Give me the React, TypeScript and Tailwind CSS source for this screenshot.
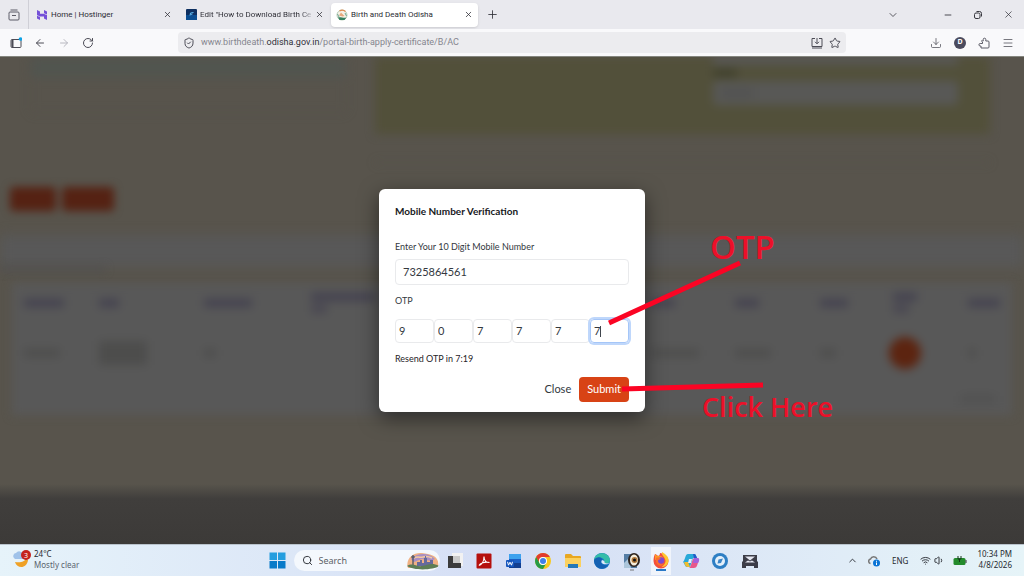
import { useState } from "react";
import {
  ArrowLeft,
  ArrowRight,
  ChevronDown,
  ChevronUp,
  Download,
  Menu,
  Minus,
  Plus,
  RotateCw,
  Search,
  ShieldCheck,
  Star,
  Volume1,
  Wifi,
  X,
} from "lucide-react";

interface TableColumn {
  header: string;
  subHeader?: string;
  cell: string;
}

// placeholder widths for the content behind the dialog
const columns: TableColumn[] = [
  { header: "w-10", cell: "w-9" },
  { header: "w-5", cell: "w-12 h-6" },
  { header: "w-12", cell: "w-3" },
  { header: "w-16", subHeader: "w-4", cell: "w-0" },
  { header: "w-6", cell: "w-12" },
  { header: "w-6", cell: "w-9" },
  { header: "w-7", cell: "w-4" },
  { header: "w-6", subHeader: "w-4", cell: "dot" },
  { header: "w-8", cell: "w-2" },
];

function HostingerIcon() {
  return (
    <svg viewBox="0 0 12 12" className="size-3 shrink-0">
      <path
        d="M1 1l3 1.500v2.300h3.800L11 6.300H1zM8 1l3 1.500v3L8 4.200zM1 6.800l3 1.300V11L1 9.500zM1 6h10v5L8 9.500V7.600H4z"
        fill="#7450d8"
      />
    </svg>
  );
}

function BlueSiteIcon() {
  return (
    <svg viewBox="0 0 11 11" className="size-[11px] shrink-0">
      <rect width="11" height="11" rx="1" fill="#0d2f60" />
      <rect y="6" width="11" height="5" fill="#0a4d91" />
      <path d="M4 6.500l.5-2.500 3-.5M4.500 5.500l2-.5" stroke="#5cbaf3" fill="none" />
    </svg>
  );
}

function OdishaIcon() {
  return (
    <svg viewBox="0 0 12 12" className="size-3 shrink-0">
      <circle cx="6" cy="6" r="5" fill="#f6f1e7" stroke="#b7cdb8" />
      <path d="M3.500 2a5 5 0 0 1 6 .5" stroke="#e18a50" strokeWidth="1.200" fill="none" />
      <path d="M3 6.500l2-3L8.500 7l-2 .5z" fill="#e6a97f" />
      <path d="M2 8.500c2-1 6 1 8.500 0L8.500 11h-5z" fill="#36805f" />
      <path d="M1.500 5l1.500 3M9 4l1.500 3" stroke="#6fa593" />
    </svg>
  );
}

function BrowserTabs() {
  return (
    <div className="flex h-[29px] items-center bg-[#e9e9ee] font-[Roboto,sans-serif] text-[8px] text-[#2b2b33]">
      <button aria-label="Recent browsing" className="flex h-full w-[29px] items-center justify-center border-r border-[#cfcfd6]">
        <svg viewBox="0 0 12 12" className="size-3" fill="none" stroke="#5b5b66">
          <path d="M2.500 1h7M1 5.500V4a1 1 0 0 1 1-1h8a1 1 0 0 1 1 1v6a1 1 0 0 1-1 1H2a1 1 0 0 1-1-1zM4 6.500h4" />
        </svg>
      </button>
      <div className="flex w-[150px] items-center gap-[3px] px-[7px]">
        <HostingerIcon />
        <span className="flex-1 whitespace-nowrap">Home | Hostinger</span>
        <button aria-label="Close Home tab">
          <X size={9} />
        </button>
      </div>
      <div className="flex w-[152px] items-center gap-[3px] px-[7px]">
        <BlueSiteIcon />
        <span className="flex-1 bg-linear-to-r from-[#2b2b33] from-90% to-[#c9c9d0] bg-clip-text whitespace-nowrap text-transparent">
          Edit "How to Download Birth Ce
        </span>
        <button aria-label="Close Edit tab">
          <X size={9} />
        </button>
      </div>
      <div className="flex h-6 w-[147px] items-center gap-[3px] rounded bg-white px-[5px] shadow-sm">
        <OdishaIcon />
        <span className="flex-1 whitespace-nowrap">Birth and Death Odisha</span>
        <button aria-label="Close Birth and Death tab">
          <X size={9} />
        </button>
      </div>
      <button aria-label="New tab" className="ml-2">
        <Plus size={13} strokeWidth={1.5} />
      </button>
      <div className="ml-auto flex items-center pr-[10px]">
        <button aria-label="List all tabs" className="mr-11">
          <ChevronDown size={12} strokeWidth={1.5} />
        </button>
        <div className="flex items-center gap-5">
          <button aria-label="Minimize">
            <Minus size={10} />
          </button>
          <button aria-label="Restore">
            <svg viewBox="0 0 10 10" className="size-[10px]" fill="none" stroke="#38383f">
              <rect x="1.500" y="3" width="5.500" height="5.500" rx="1.500" />
              <path d="M3.500 1.500h3a2 2 0 0 1 2 2v3" />
            </svg>
          </button>
          <button aria-label="Close window">
            <X size={11} strokeWidth={1.5} />
          </button>
        </div>
      </div>
    </div>
  );
}

function Toolbar() {
  return (
    <div className="flex h-[27px] items-center bg-[#f9f9fb] text-[#4c4c56]">
      <div className="flex w-[178px] items-center gap-3 pl-[10px]">
        <button aria-label="Toggle sidebar">
          <svg viewBox="0 0 12 12" className="size-3" fill="none" stroke="#4c4c56">
            <rect x="1" y="2.500" width="10" height="8" rx="1" />
            <path d="M2.500 3v7" strokeWidth="2" />
            <circle cx="10.500" cy="2" r="1.800" fill="#0ca2e6" stroke="none" />
          </svg>
        </button>
        <button aria-label="Back">
          <ArrowLeft size={12} />
        </button>
        <button aria-label="Forward" className="text-[#b8b8c0]">
          <ArrowRight size={12} />
        </button>
        <button aria-label="Reload">
          <RotateCw size={12} />
        </button>
      </div>
      <div className="flex h-[21px] flex-1 items-center gap-[6px] rounded bg-[#ececef] px-[5px]">
        <ShieldCheck size={12} />
        <span className="flex-1 font-[Roboto,sans-serif] text-[9px] whitespace-nowrap text-[#85858e]">
          www.birthdeath.<span className="text-[#2f2f38]">odisha.gov.in</span>/portal-birth-apply-certificate/B/AC
        </span>
        <button aria-label="Install app">
          <svg viewBox="0 0 12 12" className="size-3" fill="none" stroke="#4c4c56">
            <path d="M4 1.500H1v8h10v-8H8M6 1v5.500M4 4.800l2 2 2-2M1 11h10" />
          </svg>
        </button>
        <button aria-label="Bookmark this page">
          <Star size={12} />
        </button>
      </div>
      <div className="flex w-[178px] items-center justify-end gap-3 pr-[10px]">
        <button aria-label="Downloads">
          <Download size={12} strokeWidth={1.5} />
        </button>
        <button aria-label="Account" className="flex size-3 items-center justify-center rounded-full bg-[#4b4b5e] text-[7px] font-bold text-white">
          D
        </button>
        <button aria-label="Extensions">
          <svg viewBox="0 0 12 12" className="size-3" fill="none" stroke="#5b5b66">
            <path d="M3 4h2.200V2.500a1.300 1.300 0 0 1 2.600 0V4H10a1 1 0 0 1 1 1v5a1 1 0 0 1-1 1H3V9H2.200a1.200 1.200 0 0 1 0-2.500H4.500V5" />
          </svg>
        </button>
        <button aria-label="Menu">
          <Menu size={12} strokeWidth={1.5} />
        </button>
      </div>
    </div>
  );
}

function DimmedPage() {
  return (
    <div aria-hidden="true" className="flex flex-1 flex-col overflow-hidden border-t border-[#85867f] bg-[#58544c]">
      <div className="flex gap-7 pr-[34px] pl-[30px] blur-[5px]">
        <div className="h-14 w-[317px] rounded border border-[#544f4c]">
          <div className="h-5 rounded-b bg-[#51554f]" />
        </div>
        <div className="h-[106px] flex-1 border-b border-[#54504b]">
          <div className="flex h-[77px] justify-end bg-[#52503a] pr-8">
            <div className="flex w-[245px] flex-col">
              <div className="h-2 bg-[#585856]" />
              <div className="my-1 h-2 w-6 bg-[#40402c]" />
              <div className="h-6 rounded bg-[#585856] px-2 py-2">
                <div className="h-2 w-8 bg-[#515151]" />
              </div>
            </div>
          </div>
        </div>
      </div>
      <div className="mt-6 flex gap-[6px] pl-[10px] blur-[4px]">
        <div className="h-6 w-[46px] rounded bg-[#552213]" />
        <div className="h-6 w-[52px] rounded bg-[#552213]" />
      </div>
      <div className="mt-6 h-8 bg-[#585858] blur-[6px]" />
      <div className="h-1 w-[105px] bg-[#504f50] blur-[4px]" />
      <div className="mx-[12px] mt-3 h-[132px] bg-[#585858] blur-[5px]">
        <div className="grid grid-cols-[75fr_105fr_108fr_340fr_85fr_85fr_73fr_75fr_32fr] px-3 pt-2">
          {columns.map((col, i) => (
            <div key={i}>
              <div className="flex h-6 flex-col justify-center gap-1">
                <div className={`h-2 bg-[#43414f] ${col.header}`} />
                {col.subHeader && <div className={`h-2 bg-[#484651] ${col.subHeader}`} />}
              </div>
              <div className="mt-5 flex h-9 items-center">
                {col.cell === "dot" ? (
                  <div className="-ml-1 size-8 shrink-0 rounded-full bg-[#5c2410]" />
                ) : (
                  <div className={`h-2 bg-[#4d4d4c] ${col.cell}`} />
                )}
              </div>
            </div>
          ))}
        </div>
        <div className="mt-6 mr-4 ml-auto h-2 w-9 bg-[#515151]" />
      </div>
      <div className="mt-auto h-[60px] bg-linear-to-b from-[#58544c] via-[#403e3c] via-25% to-[#3c3a38]" />
    </div>
  );
}

function Annotations() {
  return (
    <div className="pointer-events-none font-['Open_Sans','Noto_Sans',sans-serif] font-semibold whitespace-nowrap text-[#ec1029]">
      <svg viewBox="0 0 160 134" className="absolute top-[70px] left-[229px] h-[134px] w-40" stroke="#fb0424">
        <path d="M132 4L1 64" strokeWidth="5" />
        <path d="M14 130L155 126" strokeWidth="5" />
      </svg>
      <span className="absolute top-[42px] left-[331px] text-[33px] leading-8">OTP</span>
      <span className="absolute top-[204px] left-[323px] text-[27px] leading-7">Click Here</span>
    </div>
  );
}

function VerificationDialog() {
  const [mobile, setMobile] = useState("7325864561");
  const [otp, setOtp] = useState(["9", "0", "7", "7", "7", "7"]);

  const updateDigit = (index: number, value: string) => {
    setOtp(otp.map((digit, i) => (i === index ? value : digit)));
  };

  return (
    <div className="absolute inset-0 flex items-center justify-center">
      <div
        role="dialog"
        aria-labelledby="dialog-title"
        className="relative w-[266px] rounded-md bg-white px-4 pt-4 pb-[10px] font-['Lato',sans-serif] text-[9px] leading-3 text-[#33383e] shadow-[0_6px_20px_rgba(0,0,0,0.5)]"
      >
        <h2 id="dialog-title" className="text-[10px] leading-3 font-bold text-[#17191c]">
          Mobile Number Verification
        </h2>
        <label htmlFor="mobile" className="mt-6 block">
          Enter Your 10 Digit Mobile Number
        </label>
        <input
          id="mobile"
          value={mobile}
          onChange={(e) => setMobile(e.target.value)}
          className="mt-[6px] block h-[26px] w-full rounded border border-[#e9eaec] px-[7px] text-[11px]"
        />
        <label htmlFor="otp-0" className="mt-[10px] block">
          OTP
        </label>
        <div className="mt-3 flex">
          {otp.map((digit, i) => (
            <div key={i} className="relative flex-1">
              <input
                id={`otp-${i}`}
                aria-label={`OTP digit ${i + 1}`}
                maxLength={1}
                value={digit}
                onChange={(e) => updateDigit(i, e.target.value)}
                className={`block h-6 w-full rounded border pl-[3px] text-[11px] outline-none ${
                  i === 5
                    ? "border-[#a5c6f8] ring-2 ring-[#bfd7fb]"
                    : "border-[#e9eaec]"
                }`}
              />
              {i === 5 && <span className="absolute top-[7px] left-[10px] h-[11px] w-px bg-[#40464d]" />}
            </div>
          ))}
        </div>
        <p className="mt-[10px] text-[#1f2327]">Resend OTP in 7:19</p>
        <div className="mt-3 flex justify-end text-[11px]">
          <button className="px-2">Close</button>
          <button className="h-[25px] rounded bg-[#d84315] px-2 text-white">Submit</button>
        </div>
        <Annotations />
      </div>
    </div>
  );
}

function TaskbarIcons() {
  return (
    <div className="ml-[5px] flex w-[315px] items-center justify-between">
      <button aria-label="Task view">
        <svg viewBox="0 0 20 20" className="size-5">
          <rect x="7" y="2" width="11" height="13" fill="#f2f2f2" />
          <path d="M3 5h5v7h8v5H3z" fill="#3b3b3b" />
          <path d="M8 5h7v7H8z" fill="#cacaca" />
        </svg>
      </button>
      <button aria-label="Acrobat">
        <svg viewBox="0 0 20 20" className="size-5">
          <rect x="2.500" y="2.500" width="15" height="15" rx="1" fill="#b5100d" />
          <path
            d="M5 14.500c3-1 5-5 5-9M10 5.500c0 4 2 6.500 5.500 6M5 14.500c1-2.500 6-4 10.500-3"
            stroke="#fff"
            strokeWidth="1.100"
            fill="none"
          />
        </svg>
      </button>
      <button aria-label="Word">
        <svg viewBox="0 0 20 20" className="size-5">
          <rect x="5" y="3" width="12" height="14" rx="1" fill="#1c5fc4" />
          <path d="M5 3h12v5H5z" fill="#3ea2ee" />
          <path d="M5 12h12v5H5z" fill="#123f91" />
          <rect x="2" y="9" width="8" height="7" rx="1" fill="#1555bd" />
          <path d="M3.500 10.800l1 3.400 1.500-3 1.500 3 1-3.400" stroke="#fff" fill="none" />
        </svg>
      </button>
      <button aria-label="Chrome">
        <svg viewBox="0 0 20 20" className="size-5">
          <circle cx="10" cy="10" r="8" fill="#f8c81c" />
          <path d="M3.100 6A8 8 0 0 1 16.900 6H10a4 4 0 0 0-3.500 6z" fill="#e23b2e" />
          <path d="M3.100 6A8 8 0 0 0 10 18l3.500-6a4 4 0 0 1-7 0z" fill="#279b48" />
          <circle cx="10" cy="10" r="4" fill="#fff" />
          <circle cx="10" cy="10" r="3" fill="#3f80e8" />
        </svg>
      </button>
      <button aria-label="File Explorer">
        <svg viewBox="0 0 20 20" className="size-5">
          <path d="M2 4a1 1 0 0 1 1-1h5l2 2h7a1 1 0 0 1 1 1v10H2z" fill="#e8a722" />
          <path d="M2 7h16v9H2z" fill="#fbd160" />
          <path d="M5 13h10v4H5z" fill="#2478b8" />
        </svg>
      </button>
      <button aria-label="Edge">
        <svg viewBox="0 0 20 20" className="size-5">
          <circle cx="10" cy="10" r="8" fill="#1776c3" />
          <path d="M2 9c1-9 15-9 16 0 0 4-4 4-6 3 2-5-5-8-10-3z" fill="#35bda9" />
          <path d="M2 9c3-4 8-3 8 0-3 2 0 6 6 5-5 7-14 3-14-5z" fill="#1561b3" />
          <path d="M10 9c-2 3 1 5 6 4l1.500-1c-3 1-6 0-5-2z" fill="#dceaf8" />
        </svg>
      </button>
      <button aria-label="Image viewer">
        <svg viewBox="0 0 20 20" className="size-5">
          <rect x="2" y="3" width="13" height="14" fill="#547da5" />
          <path d="M2 12l4-4 3 9H2z" fill="#abc5da" />
          <ellipse cx="12" cy="9" rx="6" ry="7" fill="#2e241e" />
          <ellipse cx="12" cy="9" rx="4" ry="5.500" fill="#f6edda" />
          <circle cx="12.500" cy="9" r="3" fill="#b2793a" />
          <circle cx="12.500" cy="9" r="1.500" fill="#111" />
          <path d="M8 19h4" stroke="#777" />
        </svg>
      </button>
      <button aria-label="Firefox" className="flex h-7 items-center bg-white/60">
        <svg viewBox="0 0 20 20" className="size-5">
          <path d="M4 3c1 0 2 1 3 2 1 0 2-1 2-3 2 0 3 1 4 2 3 1 4.500 4 4.500 6a7.500 7.500 0 0 1-15 0C2.500 7 3 5 4 3z" fill="#f4503a" />
          <path d="M11 1c3 2 7 4 6.500 9-.5 4-4 6-7 6 4-3 5-6 3-9-1-2-3-3-2.500-6z" fill="#ffc62e" />
          <path d="M4 3c1 1 2 2 3 2 2-.5 4 0 5 2l-5 1-3 1z" fill="#fd9a26" />
          <circle cx="10" cy="9.500" r="3.200" fill="#7e49cf" />
          <path d="M5 7c2-1 4 0 5 1-2 0-3 1-3 2 0 3 4 4 6 2-2 5-9 3-8-5z" fill="#fb6f2d" />
          <path d="M5 19h10" stroke="#2878c7" strokeWidth="2" />
        </svg>
      </button>
      <button aria-label="Copilot">
        <svg viewBox="0 0 20 20" className="size-5">
          <path d="M7 3h6c2 0 2 2 3 4h-4l-3 9H6c-2 0-2-3-4-5 2-1 2-8 5-8z" fill="#28a9d8" />
          <path d="M3 11h4l2 5H7c-3 0-3-3-4-5z" fill="#efbd31" />
          <path d="M13 17H8c2 0 3-9 5-10h3c3 0 2 3 1 5s-1 5-4 5z" fill="#e8588a" />
          <path d="M12 3h1c2 0 2 2 3 4h-3z" fill="#2459c8" />
          <path d="M13 7h4c2 1 1 3 0 5h-5z" fill="#a461dc" />
          <path d="M8 8h3l-1 4H7z" fill="#e9edf9" />
        </svg>
      </button>
      <button aria-label="Browser">
        <svg viewBox="0 0 20 20" className="size-5">
          <circle cx="10" cy="10" r="8" fill="#2e7fc4" />
          <circle cx="10" cy="10" r="5" fill="#e4f0fa" />
          <path d="M7.500 12.500l1-4 4.500-1-2 4.500z" fill="#3a85c7" />
        </svg>
      </button>
      <button aria-label="Mail downloader">
        <svg viewBox="0 0 20 20" className="size-5">
          <path d="M3 4h14v6l1 1v6h-4v-2H6v2H2v-6l1-1z" fill="#3c3d48" />
          <path d="M5 5.500h10l-5 4zM5 11.500l3-2 2 1 2-1 3 2z" fill="#e6e8f2" />
        </svg>
      </button>
    </div>
  );
}

function Taskbar() {
  return (
    <div className="flex h-8 items-center border-t border-[#b9c3cc] bg-linear-to-r from-[#e6f3fa] via-[#d5def5] to-[#e6f4f8] text-[8px] leading-[11px] text-[#262a30]">
      <div className="flex flex-1 items-center gap-[2px] pb-[3px] pl-3">
        <svg viewBox="0 0 20 20" className="size-5">
          <path d="M2 9a3 3 0 0 1 2-5 4 4 0 0 1 7 1v5H3z" fill="#9fc2e9" />
          <path d="M14 9c-1 4-6 5-11 4 2 7 12 7 13-2z" fill="#efa126" />
          <circle cx="14" cy="6" r="5" fill="#c5221f" />
          <text x="14" y="8.500" textAnchor="middle" fontSize="7" fill="#fff">
            3
          </text>
        </svg>
        <div>
          <p>24°C</p>
          <p className="text-[#5a636e]">Mostly clear</p>
        </div>
      </div>
      <div className="flex items-center pl-1">
        <button aria-label="Start" className="mr-2">
          <svg viewBox="0 0 17 17" className="size-[17px]">
            <path d="M0.500 0.500h7.500V8H.5zM9 .5h7.500V8H9z" fill="#239ddf" />
            <path d="M.5 9H8v7.500H.5zM9 9h7.500v7.500H9z" fill="#087ac9" />
          </svg>
        </button>
        <label className="flex h-[21px] w-[146px] items-center gap-[6px] overflow-hidden rounded-full bg-[#f4f8fd] pl-2">
          <Search size={11} />
          <input aria-label="Search" placeholder="Search" className="w-0 flex-1 text-[9px] placeholder:text-[#5b5f66]" />
          <svg viewBox="0 0 34 20" className="h-5 w-[34px] shrink-0">
            <path d="M2 17C-1 8 7 1 16 2s18 3 16 14z" fill="#f0b183" />
            <path d="M5 8c5-6 18-7 24 0l-4 2-9-2-8 3z" fill="#a98fc4" />
            <path d="M8 7c4-2 6 0 9-1s7 0 9 1" stroke="#f4c9a0" strokeWidth="1.500" fill="none" />
            <path d="M11 15v-4h3V9h2v3h2V7h1V5h1v2h1v4h3V9h3v6z" fill="#666a9c" />
            <path d="M7 4v12M5 6h4" stroke="#3b4c61" strokeWidth="1.200" />
            <path d="M1 15c6-4 9 1 15 0s10-4 17 0c-5 4-25 5-32 0z" fill="#5d7d55" />
          </svg>
        </label>
        <TaskbarIcons />
      </div>
      <div className="flex flex-1 items-center justify-end pr-3">
        <button aria-label="Show hidden icons" className="mr-[10px]">
          <ChevronUp size={11} />
        </button>
        <svg viewBox="0 0 12 12" className="mr-3 size-3">
          <path d="M2.500 8.500a2.300 2.300 0 0 1 0-4.500 3.500 3.500 0 0 1 6.500 0" stroke="#777" fill="none" strokeWidth="1.500" />
          <circle cx="8.500" cy="8" r="3.500" fill="#0a74d6" />
          <path d="M8.500 7.500v2.500M8.500 5.800v1" stroke="#fff" />
        </svg>
        <span className="mr-3">ENG</span>
        <Wifi size={11} className="mr-[3px]" />
        <Volume1 size={11} className="mr-2" />
        <svg viewBox="0 0 14 10" className="mr-[10px] h-[10px] w-[14px]">
          <rect x="0.500" y="2" width="12" height="7" rx="1.500" fill="#238b2c" />
          <path d="M13 4v3" stroke="#333" />
          <path d="M5 0v3h3V0M6.500 3v3" stroke="#14391a" fill="none" />
        </svg>
        <div className="pb-[3px] text-right">
          <p>10:34 PM</p>
          <p>4/8/2026</p>
        </div>
      </div>
    </div>
  );
}

export default function App() {
  return (
    <div className="flex min-h-screen flex-col font-['Noto_Sans','Open_Sans',sans-serif]">
      <BrowserTabs />
      <Toolbar />
      <main className="relative flex flex-1 flex-col">
        <DimmedPage />
        <VerificationDialog />
      </main>
      <Taskbar />
    </div>
  );
}
